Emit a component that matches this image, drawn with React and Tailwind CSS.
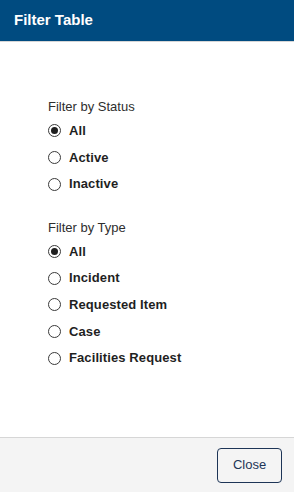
import React, { useState } from "react";

const statusOptions = ["All", "Active", "Inactive"];
const typeOptions = ["All", "Incident", "Requested Item", "Case", "Facilities Request"];

function RadioGroup({ label, name, options, value, onChange }) {
  return (
    <fieldset className="mb-[20px]">
      <legend className="text-[13px] text-[#2e2e2e] mb-[1px]">{label}</legend>
      <div className="flex flex-col">
        {options.map((opt) => (
          <label key={opt} className="flex items-center h-[26.7px] gap-[8px] cursor-pointer">
            <span className="w-[13px] h-[13px] rounded-full border border-[#3a3a3a] flex items-center justify-center">
              {value === opt && <span className="w-[7px] h-[7px] rounded-full bg-[#1f1f1f]" />}
            </span>
            <input
              type="radio"
              name={name}
              className="hidden"
              checked={value === opt}
              onChange={() => onChange(opt)}
            />
            <span className="text-[13px] font-bold text-[#1f1f1f] tracking-[0.1px]">{opt}</span>
          </label>
        ))}
      </div>
    </fieldset>
  );
}

export default function App() {
  const [status, setStatus] = useState("All");
  const [type, setType] = useState("All");

  return (
    <div className="w-[294px] h-[492px] flex flex-col bg-white font-['Liberation_Sans',Arial,sans-serif]">
      {/* Header */}
      <div className="h-[42px] bg-[#004b80] border-b border-[#d6d6d6] flex items-center px-[14px] shrink-0">
        <h1 className="text-[15px] font-bold text-white">Filter Table</h1>
      </div>

      {/* Body */}
      <div className="flex-1 pt-[55px] pl-[48px]">
        <RadioGroup label="Filter by Status" name="status" options={statusOptions} value={status} onChange={setStatus} />
        <RadioGroup label="Filter by Type" name="type" options={typeOptions} value={type} onChange={setType} />
      </div>

      {/* Footer */}
      <div className="h-[55px] bg-[#f4f4f4] border-t border-[#d6d6d6] flex items-center justify-end px-[12px] shrink-0">
        <button className="w-[65px] h-[35px] rounded-[4px] border border-[#1d3557] text-[13px] text-[#1d3557] bg-transparent">
          Close
        </button>
      </div>
    </div>
  );
}
